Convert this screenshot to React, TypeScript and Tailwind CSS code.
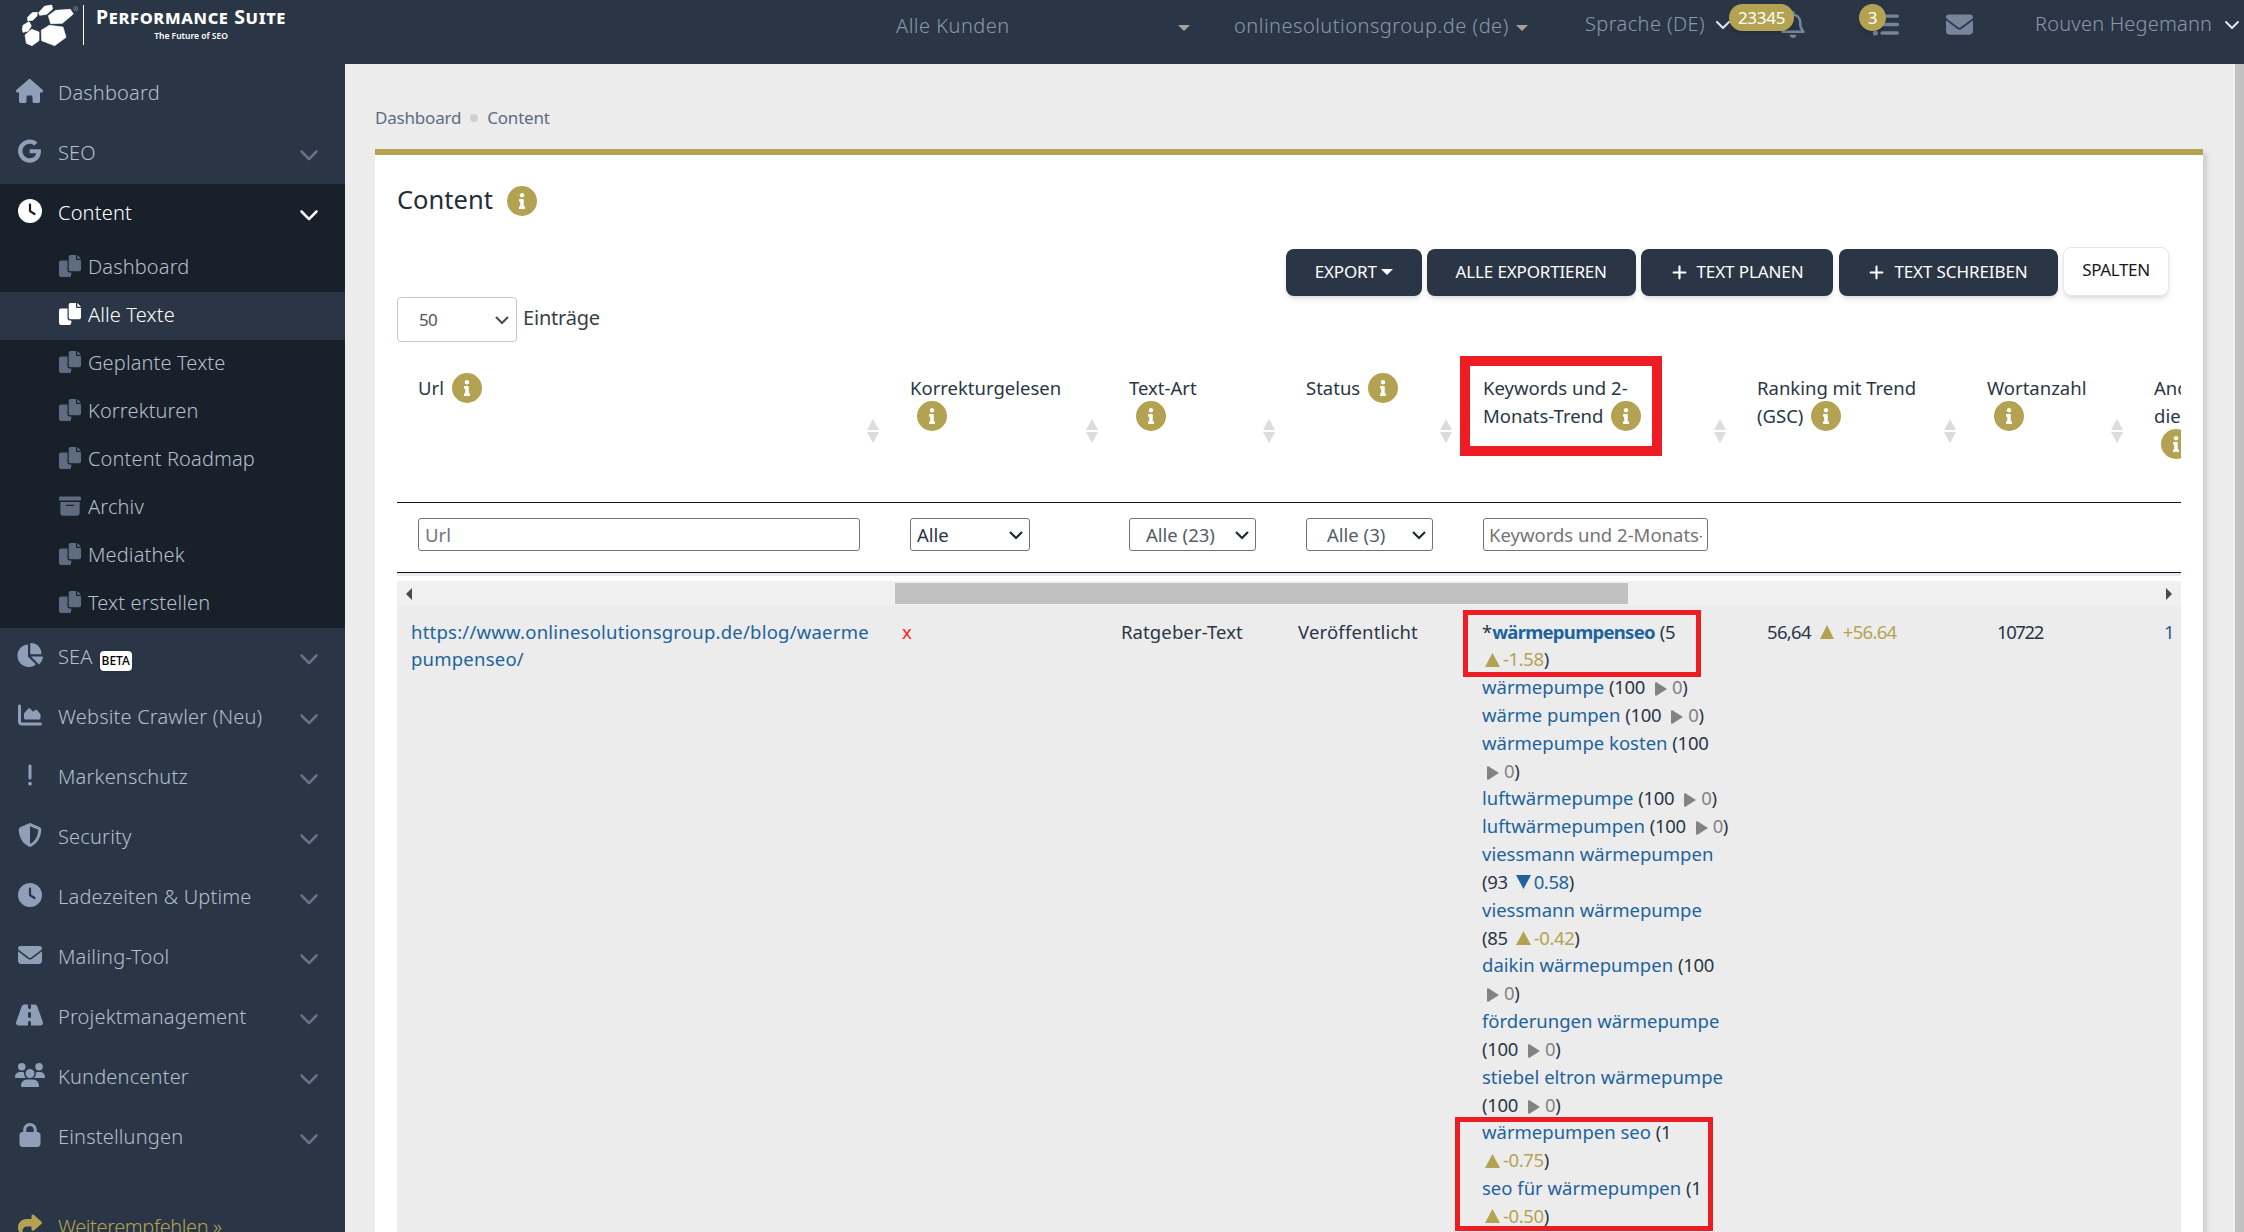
import type { ReactNode } from "react";

import clsx from "clsx";
import type { IconType } from "react-icons";
import { FaInfo } from "react-icons/fa";
import {
  FaBoxArchive,
  FaChartArea,
  FaChartPie,
  FaChevronDown,
  FaCircle,
  FaClock,
  FaEnvelope,
  FaExclamation,
  FaGoogle,
  FaHouse,
  FaListUl,
  FaLock,
  FaPlus,
  FaRegBell,
  FaRoad,
  FaShare,
  FaShieldHalved,
  FaUsers,
} from "react-icons/fa6";

type MenuItem = {
  label: string;
  icon: IconType;
  iconSize?: string;
  plain?: boolean;
  beta?: boolean;
};

const CopyIcon = ({ className }: { className?: string }) => (
  <svg viewBox="0 0 22 22" className={className}>
    <path
      d="M11.5 0H17v4a1 1 0 0 0 1 1h4v9.500a1.800 1.800 0 0 1-1.800 1.800h-8.700a1.800 1.800 0 0 1-1.800-1.800V1.800A1.800 1.800 0 0 1 11.500 0zM18.300 0 22 3.700h-3.700zM2 5.500h6.500v9.300a2.800 2.800 0 0 0 2.800 2.800H12.300V20a2 2 0 0 1-2 2H2a2 2 0 0 1-2-2V7.500a2 2 0 0 1 2-2z"
      fill="currentColor"
    />
  </svg>
);

const contentItems = [
  { label: "Dashboard", icon: CopyIcon },
  { label: "Alle Texte", icon: CopyIcon },
  { label: "Geplante Texte", icon: CopyIcon },
  { label: "Korrekturen", icon: CopyIcon },
  { label: "Content Roadmap", icon: CopyIcon },
  { label: "Archiv", icon: FaBoxArchive },
  { label: "Mediathek", icon: CopyIcon },
  { label: "Text erstellen", icon: CopyIcon },
];

const topItems: MenuItem[] = [
  { label: "Dashboard", icon: FaHouse, iconSize: "h-6 w-[27px]", plain: true },
  { label: "SEO", icon: FaGoogle, iconSize: "h-6 w-[23px]" },
];

const bottomItems: MenuItem[] = [
  { label: "SEA", icon: FaChartPie, iconSize: "h-6 w-[27px]", beta: true },
  { label: "Website Crawler (Neu)", icon: FaChartArea },
  { label: "Markenschutz", icon: FaExclamation },
  { label: "Security", icon: FaShieldHalved },
  { label: "Ladezeiten & Uptime", icon: FaClock },
  { label: "Mailing-Tool", icon: FaEnvelope },
  { label: "Projektmanagement", icon: FaRoad, iconSize: "h-6 w-[27px]" },
  { label: "Kundencenter", icon: FaUsers, iconSize: "h-6 w-[30px]" },
  { label: "Einstellungen", icon: FaLock },
];

const columns = [
  { lines: ["Url"], width: "w-[492px]", info: "inline" },
  { lines: ["Korrekturgelesen"], width: "w-[219px]", info: "below" },
  { lines: ["Text-Art"], width: "w-[177px]", info: "below" },
  { lines: ["Status"], width: "w-[177px]", info: "inline" },
  { lines: ["Keywords und 2-", "Monats-Trend"], width: "w-[274px]", info: "inline", marked: true },
  { lines: ["Ranking mit Trend", "(GSC)"], width: "w-[230px]", info: "inline" },
  { lines: ["Wortanzahl"], width: "w-[167px]", info: "below" },
  { lines: ["Anchor", "dieser"], width: "w-[168px]", info: "below" },
];

type Keyword = {
  word: string;
  rank: string;
  trend: "up" | "down" | "same";
  delta: string;
  breakAt?: "rank" | "trend";
  main?: boolean;
};

const keywords: Keyword[] = [
  { word: "wärmepumpenseo", rank: "5", trend: "up", delta: "-1.58", breakAt: "trend", main: true },
  { word: "wärmepumpe", rank: "100", trend: "same", delta: "0" },
  { word: "wärme pumpen", rank: "100", trend: "same", delta: "0" },
  { word: "wärmepumpe kosten", rank: "100", trend: "same", delta: "0", breakAt: "trend" },
  { word: "luftwärmepumpe", rank: "100", trend: "same", delta: "0" },
  { word: "luftwärmepumpen", rank: "100", trend: "same", delta: "0" },
  { word: "viessmann wärmepumpen", rank: "93", trend: "down", delta: "0.58", breakAt: "rank" },
  { word: "viessmann wärmepumpe", rank: "85", trend: "up", delta: "-0.42", breakAt: "rank" },
  { word: "daikin wärmepumpen", rank: "100", trend: "same", delta: "0", breakAt: "trend" },
  { word: "förderungen wärmepumpe", rank: "100", trend: "same", delta: "0", breakAt: "rank" },
  { word: "stiebel eltron wärmepumpe", rank: "100", trend: "same", delta: "0", breakAt: "rank" },
  { word: "wärmepumpen seo", rank: "1", trend: "up", delta: "-0.75", breakAt: "trend" },
  { word: "seo für wärmepumpen", rank: "1", trend: "up", delta: "-0.50", breakAt: "trend" },
];

const Caret = ({ className }: { className: string }) => (
  <svg viewBox="0 0 12 6" className={clsx("h-1.5 w-3 shrink-0", className)}>
    <path d="M0 0h12L6 6z" fill="currentColor" />
  </svg>
);

const InfoBadge = ({ className }: { className?: string }) => (
  <span
    className={clsx(
      "inline-flex size-[30px] shrink-0 items-center justify-center rounded-full bg-[#b4a253] text-white",
      className,
    )}
  >
    <FaInfo className="size-4" />
  </span>
);

const Logo = () => (
  <div className="flex h-16 w-[345px] shrink-0">
    <svg viewBox="0 0 240 192" className="h-16 w-20 shrink-0">
      <g fill="#fff" stroke="#fff" strokeWidth="2" strokeLinejoin="round">
        <path d="M145 47 167 31 211 28 220 42 187 70 152 71z" />
        <path d="M124 91 148 76 189 81 198 112 164 137 125 122z" />
        <path d="M75 105 95 88 117 96 117 122 96 137 79 130z" />
        <path d="M69 76 87 65 94 77 85 93 69 97 67 88z" />
        <path d="M83 52 96 38 112 37 111 48 98 61 83 62z" />
        <path d="M116 38 133 19 155 15 158 27 140 43 119 46z" />
      </g>
      <circle cx="227" cy="26" r="6" fill="none" stroke="#8d97a5" strokeWidth="2" />
      <circle cx="227" cy="26" r="2" fill="#8d97a5" />
    </svg>
    <span className="mt-[5px] ml-[3px] h-10 w-px bg-white" />
    <div className="ml-3 flex w-[190px] flex-col items-center pt-1.5 text-white">
      <span className="text-[19.5px] leading-[22px] font-bold tracking-[0.65px] whitespace-nowrap [font-variant:small-caps]">
        Performance Suite
      </span>
      <span className="text-[8.5px] leading-4 font-semibold whitespace-nowrap">The Future of SEO</span>
    </div>
  </div>
);

const Header = () => (
  <header className="flex h-16 shrink-0 bg-[#2a3646] text-[20px] leading-[30px] font-light text-[#8a98ac]">
    <Logo />
    <div className="ml-[551px] flex h-[52px] w-[294px] shrink-0 items-center justify-between">
      <span className="tracking-[0.5px]">Alle Kunden</span>
      <Caret className="mt-1 text-[#a5a29c]" />
    </div>
    <div className="ml-11 flex h-[52px] w-[294px] shrink-0 items-center justify-between">
      <span className="tracking-[0.5px] whitespace-nowrap">onlinesolutionsgroup.de (de)</span>
      <Caret className="mt-1 text-[#a5a29c]" />
    </div>
    <div className="ml-[57px] flex h-12 w-[146px] shrink-0 items-center justify-between">
      <span className="tracking-[0.4px] whitespace-nowrap">Sprache (DE)</span>
      <FaChevronDown className="size-4 text-[#dfe5ec]" />
    </div>
    <div className="relative ml-[50px] h-12 w-6 shrink-0">
      <FaRegBell className="mt-[11px] h-[27px] w-6 text-[#77859a]" />
      <span className="absolute top-1 -left-[52px] flex h-[27px] w-[65px] items-center justify-center rounded-full bg-[#b4a253] text-[17px] font-normal tracking-[-0.3px] text-white shadow-md">
        23345
      </span>
    </div>
    <div className="relative ml-[67px] h-12 w-[27px] shrink-0">
      <FaListUl className="mt-[11px] size-[27px] text-[#77859a]" />
      <span className="absolute top-1 -left-[13px] flex size-[27px] items-center justify-center rounded-full bg-[#b4a253] text-[17px] font-normal text-white shadow-md">
        3
      </span>
    </div>
    <FaEnvelope className="mt-[11px] ml-[47px] size-[27px] shrink-0 text-[#77859a]" />
    <div className="ml-[62px] flex h-12 w-[205px] shrink-0 items-center justify-between">
      <span className="tracking-[0.2px] whitespace-nowrap">Rouven Hegemann</span>
      <FaChevronDown className="size-4 text-[#dfe5ec]" />
    </div>
  </header>
);

const MenuRow = ({ item, active }: { item: MenuItem; active?: boolean }) => {
  const Icon = item.icon;
  return (
    <div
      className={clsx("flex h-[60px] shrink-0 items-center pr-[26px] pb-px", active ? "text-white" : "text-[#b4bfcd]")}
    >
      <span className={clsx("flex w-[59px] shrink-0 justify-center pb-[5px]", active ? "text-white" : "text-[#8f9fb8]")}>
        <Icon className={clsx("shrink-0", item.iconSize ?? "size-6")} />
      </span>
      <span className="-ml-px pb-px tracking-[0.18px]">{item.label}</span>
      {item.beta && (
        <span className="mt-1.5 ml-[7px] flex h-5 w-8 items-center justify-center rounded bg-white text-[12px] leading-none font-medium text-black shadow">
          BETA
        </span>
      )}
      {!item.plain && (
        <FaChevronDown className={clsx("ml-auto size-5", active ? "text-white" : "text-[#667489]")} />
      )}
    </div>
  );
};

const Sidebar = () => (
  <nav className="flex w-[345px] shrink-0 flex-col bg-[#2a3646] text-[20px] font-light whitespace-nowrap">
    {topItems.map((item) => (
      <MenuRow key={item.label} item={item} />
    ))}
    <div className="shrink-0 bg-[#18212a]">
      <MenuRow item={{ label: "Content", icon: FaClock }} active />
      {contentItems.map((item) => {
        const Icon = item.icon;
        const active = item.label === "Alle Texte";
        return (
          <div
            key={item.label}
            className={clsx(
              "flex h-12 items-center gap-[7px] pb-0.5 pl-[59px]",
              active ? "bg-[#2a3646] text-white" : "text-[#b4bfcd]",
            )}
          >
            <Icon className={clsx("mb-0.5 size-[22px]", active ? "text-white" : "text-[#5f6c80]")} />
            <span className="tracking-[0.13px]">{item.label}</span>
          </div>
        );
      })}
    </div>
    {bottomItems.map((item) => (
      <MenuRow key={item.label} item={item} />
    ))}
    <div className="mt-[29px] flex h-[60px] shrink-0 items-center text-[#b4a253]">
      <span className="flex w-[59px] shrink-0 justify-center pb-1">
        <FaShare className="size-6" />
      </span>
      <span className="-ml-px tracking-[-0.4px]">Weiterempfehlen »</span>
    </div>
  </nav>
);

const ActionButton = ({ children, className }: { children: ReactNode; className: string }) => (
  <button
    className={clsx(
      "flex h-[47px] items-center justify-center rounded-lg bg-[#2a3646] pb-px text-white shadow-md",
      className,
    )}
  >
    {children}
  </button>
);

const SortArrows = () => (
  <svg viewBox="0 0 12 24" className="absolute right-[10px] bottom-[59px] h-6 w-3 text-[#dcdcdc]">
    <path d="M6 0 12 11H0zM0 13h12L6 24z" fill="currentColor" />
  </svg>
);

const TableHead = () => (
  <div className="flex h-[129px] w-[1784px] overflow-x-clip border-b border-[#101214] text-[18.5px] leading-7">
    {columns.map((col) => (
      <div key={col.lines[0]} className={clsx("relative shrink-0 pl-[21px] whitespace-nowrap", col.width)}>
        {col.lines.map((line, i) => (
          <div key={line} className="flex h-7 items-center">
            <span className="pb-px">{line}</span>
            {col.info === "inline" && i === col.lines.length - 1 && <InfoBadge className="ml-2" />}
          </div>
        ))}
        {col.info === "below" && (
          <div className="flex h-7 items-center">
            <InfoBadge className="ml-[7px]" />
          </div>
        )}
        <SortArrows />
        {col.marked && (
          <span className="absolute -top-[18px] -left-0.5 h-[100px] w-[202px] border-[10px] border-[#ee1c23]" />
        )}
      </div>
    ))}
  </div>
);

const FilterSelect = ({ label, className }: { label: string; className: string }) => (
  <div
    className={clsx(
      "flex h-[33px] shrink-0 items-center justify-between rounded-[3px] border border-[#70757c] pr-[5px]",
      className,
    )}
  >
    <span>{label}</span>
    <svg viewBox="0 0 16 10" className="h-2.5 w-4">
      <path d="M2 2l6 6 6-6" fill="none" stroke="#1f2a38" strokeWidth="2.2" />
    </svg>
  </div>
);

const FilterRow = () => (
  <div className="flex h-[70px] items-start border-b border-[#101214] pt-[15px] pl-[21px] text-[18.5px] text-[#555d68]">
    <input
      placeholder="Url"
      className="h-[33px] w-[442px] rounded-[3px] border border-[#70757c] pl-1.5 placeholder:text-[#757575]"
    />
    <FilterSelect label="Alle" className="ml-[50px] w-[120px] pl-1.5 text-[#2a3646]" />
    <FilterSelect label="Alle (23)" className="ml-[99px] w-[127px] pl-4" />
    <FilterSelect label="Alle (3)" className="ml-[50px] w-[127px] pl-5" />
    <input
      placeholder="Keywords und 2-Monats-Trend"
      className="ml-[50px] h-[33px] w-[225px] rounded-[3px] border border-[#70757c] px-[5px] placeholder:text-[#757575]"
    />
  </div>
);

const ScrollBar = () => (
  <div className="mt-[5px] flex h-[25px] items-center bg-[#f0f0f0] text-[#4a4a4a]">
    <svg viewBox="0 0 6 12" className="ml-[9px] h-3 w-1.5">
      <path d="M6 0v12L0 6z" fill="currentColor" />
    </svg>
    <div className="ml-[483px] h-[21px] w-[733px] bg-[#c1c1c1]" />
    <svg viewBox="0 0 6 12" className="mr-[9px] ml-auto h-3 w-1.5">
      <path d="M0 0v12l6-6z" fill="currentColor" />
    </svg>
  </div>
);

const TrendIcon = ({ trend }: { trend: Keyword["trend"] }) => {
  if (trend === "same") {
    return (
      <svg viewBox="0 0 12 14" className="mr-[5px] ml-[5px] inline-block h-3.5 w-3 align-[-2px]">
        <path d="M0 1 1 0l11 7L1 14l-1-1z" fill="#828282" />
      </svg>
    );
  }
  return (
    <svg viewBox="0 0 15 14" className="mr-[3px] ml-[3px] inline-block h-3.5 w-[15px] align-[-0.5px]">
      <path d={trend === "up" ? "M7.5 0 15 14H0z" : "M0 0h15L7.5 14z"} fill="currentColor" />
    </svg>
  );
};

const KeywordEntry = ({ item }: { item: Keyword }) => (
  <div>
    {item.main && "*"}
    <a className={clsx("text-[#1d639c]", item.main ? "font-bold tracking-[-0.72px]" : "tracking-[0px]")}>
      {item.word}
    </a>
    {item.breakAt === "rank" ? <br /> : " "}
    <span className="tracking-[-0.3px]">({item.rank}</span>
    {item.breakAt === "trend" ? <br /> : " "}
    <span
      className={clsx(
        "tracking-[-0.4px]",
        item.trend === "up" && "text-[#b4a253]",
        item.trend === "down" && "text-[#1d639c]",
        item.trend === "same" && "text-[#828282]",
      )}
    >
      <TrendIcon trend={item.trend} />
      {item.delta}
    </span>
    )
  </div>
);

const DataRow = () => (
  <div className="flex flex-1 bg-[#ececec] pt-[11.5px] text-[18.5px] leading-[27.83px]">
    <div className="w-[505px] shrink-0 pl-3.5 tracking-[0.22px] text-[#1d639c]">
      https://www.onlinesolutionsgroup.de/blog/waerme
      <br />
      pumpenseo/
    </div>
    <div className="w-[219px] shrink-0 text-[#ff1c1c]">x</div>
    <div className="w-[177px] shrink-0 tracking-[0.1px]">Ratgeber-Text</div>
    <div className="w-[184px] shrink-0 tracking-[0.18px]">Veröffentlicht</div>
    <div className="relative w-[285px] shrink-0 whitespace-nowrap">
      {keywords.map((item) => (
        <KeywordEntry key={item.word} item={item} />
      ))}
      <span className="absolute -top-[7.5px] -left-[19px] h-[67px] w-[238px] border-[5px] border-[#ee1c23]" />
      <span className="absolute top-[499.5px] -left-[27px] h-[114px] w-[258px] border-[5px] border-[#ee1c23]" />
    </div>
    <div className="w-[230px] shrink-0 tracking-[-0.7px]">
      56,64
      <svg viewBox="0 0 14 14" className="mx-[9px] inline-block size-3.5 align-[-0.5px] text-[#b4a253]">
        <path d="M7 0l7 14H0z" fill="currentColor" />
      </svg>
      <span className="text-[#b4a253]">+56.64</span>
    </div>
    <div className="w-[167px] shrink-0 tracking-[-1.4px]">10722</div>
    <div className="shrink-0 text-[#1d639c]">1</div>
  </div>
);

const ContentCard = () => (
  <section className="flex w-[1828px] flex-1 flex-col border-t-[6px] border-[#b4a253] bg-white px-[22px] shadow-[4px_4px_4px_rgba(0,0,0,0.12)]">
    <h1 className="mt-7 flex h-9 items-center gap-[14px] text-[25.5px] text-[#212d3b]">
      <span className="pb-[3px]">Content</span>
      <InfoBadge />
    </h1>
    <div className="mt-[28px] flex h-[49px] justify-end gap-[5.5px] pr-3 text-[17px] font-[450]">
      <ActionButton className="mt-0.5 w-[135.5px] gap-1 tracking-[-0.2px]">
        EXPORT
        <Caret className="text-white" />
      </ActionButton>
      <ActionButton className="mt-0.5 w-[208.5px] tracking-[-0.15px]">ALLE EXPORTIEREN</ActionButton>
      <ActionButton className="mt-0.5 w-[192px] gap-[9px] tracking-[-0.1px]">
        <FaPlus className="size-[17px]" />
        TEXT PLANEN
      </ActionButton>
      <ActionButton className="mt-0.5 w-[219px] gap-[9px] tracking-[-0.1px]">
        <FaPlus className="size-[17px]" />
        TEXT SCHREIBEN
      </ActionButton>
      <button className="flex h-[49px] w-[106px] items-center justify-center rounded-lg border border-gray-200 bg-white pb-[3px] tracking-[-0.35px] text-[#16181c] shadow-md">
        SPALTEN
      </button>
    </div>
    <div className="mt-px flex h-[45px] items-start gap-1.5">
      <div className="flex h-[45px] w-[120px] items-center justify-between rounded border border-[#bfc8d8] pr-1.5 pl-[21px] text-[17px] tracking-[-0.6px] text-[#4c5661]">
        50
        <svg viewBox="0 0 16 10" className="h-2.5 w-4">
          <path d="M2 2l6 6 6-6" fill="none" stroke="#4a4f57" strokeWidth="2.2" />
        </svg>
      </div>
      <span className="mt-1.5 text-[20px] leading-[30px] tracking-[-0.2px] text-[#3a3f46]">Einträge</span>
    </div>
    <div className="mt-8">
      <TableHead />
      <FilterRow />
      <div className="h-[3px] bg-[#e7ebef]" />
      <ScrollBar />
    </div>
    <DataRow />
  </section>
);

export default function App() {
  return (
    <div className="flex h-screen flex-col overflow-hidden bg-[#ececec] font-['Noto_Sans',sans-serif] text-[#2a3646]">
      <Header />
      <div className="flex min-h-0 flex-1">
        <Sidebar />
        <main className="flex min-w-0 flex-1 flex-col overflow-hidden pl-[30px]">
          <div className="mt-[40px] mb-[17px] flex h-7 shrink-0 items-center gap-[9px] text-[17px] tracking-[-0.2px] text-[#5c6b80]">
            Dashboard
            <FaCircle className="size-2 text-[#d0d0d0]" />
            Content
          </div>
          <ContentCard />
        </main>
        <div className="w-[11px] shrink-0 border-l-2 border-[#f1f1f1] bg-[#c1c1c1]" />
      </div>
    </div>
  );
}
